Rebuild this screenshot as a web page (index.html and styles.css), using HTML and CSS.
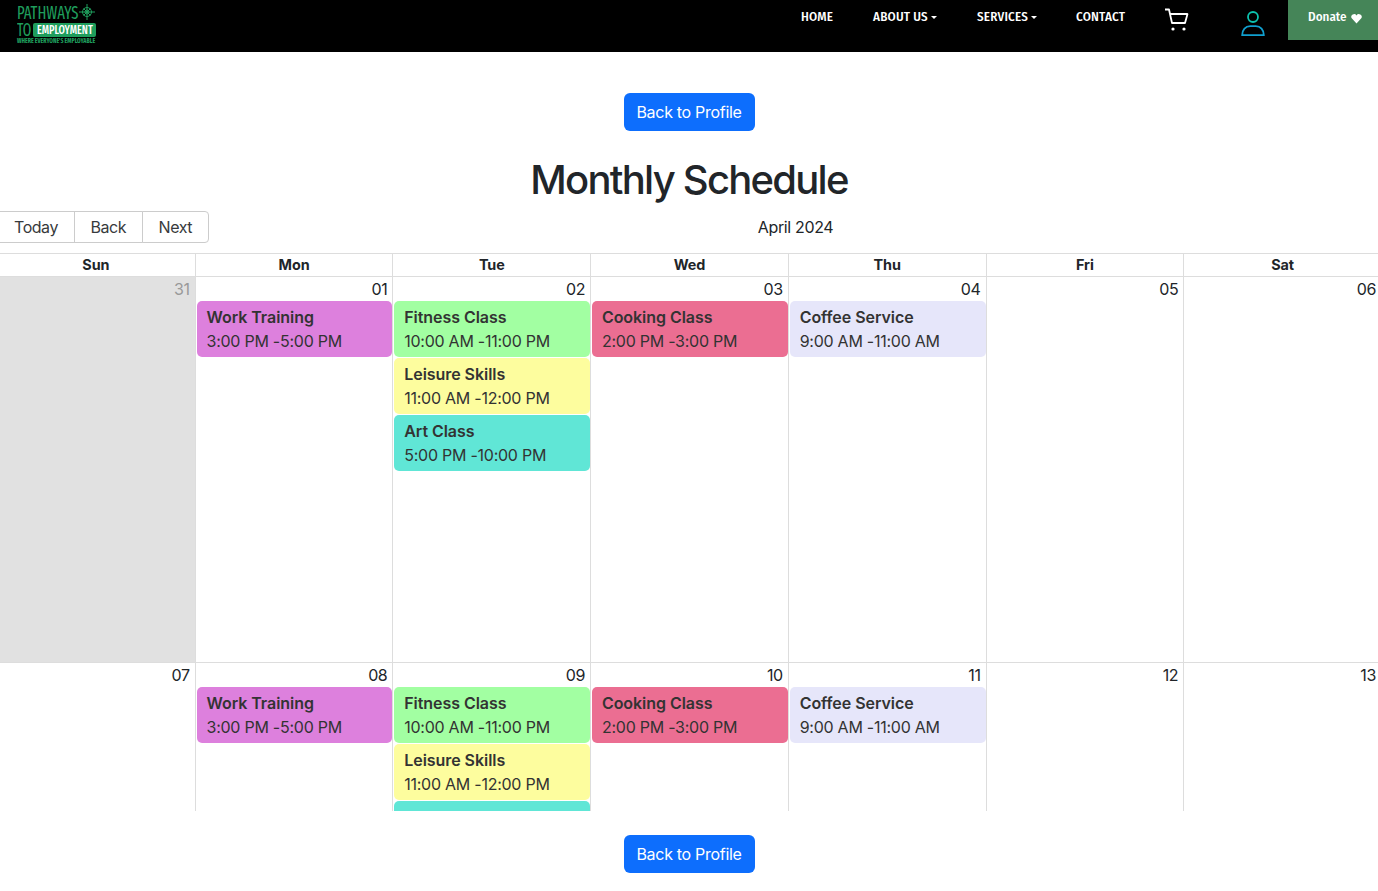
FILE: index.html
```html
<!DOCTYPE html>
<html lang="en">
<head>
<meta charset="utf-8">
<title>Monthly Schedule</title>
<link rel="stylesheet" href="styles.css">
</head>
<body>
<header class="topbar">
  <a class="logo" href="#">
    <span class="logo-top"><span class="logo-path">PATHWAYS</span>
      <svg class="logo-compass" viewBox="0 0 16 16" fill="none" stroke="#1f9d5c" stroke-width="1"><circle cx="8" cy="8" r="4.500"/><circle cx="8" cy="8" r="2"/><path d="M8 0v16M0 8h16M4.500 4.500l7 7M11.500 4.500l-7 7"/></svg>
    </span>
    <span class="logo-mid"><span class="logo-to">TO</span><span class="logo-pill"><span class="logo-emp">EMPLOYMENT</span></span></span>
    <span class="logo-tag">WHERE EVERYONE'S EMPLOYABLE</span>
  </a>
  <nav class="nav">
    <a class="nav-link nav-home" href="#">HOME</a>
    <a class="nav-link nav-about" href="#">ABOUT US<span class="caret"></span></a>
    <a class="nav-link nav-services" href="#">SERVICES<span class="caret"></span></a>
    <a class="nav-link nav-contact" href="#">CONTACT</a>
    <a class="nav-cart" href="#" aria-label="Cart">
      <svg viewBox="0 0 24 24" width="24" height="24" fill="none" stroke="#fff" stroke-width="1.800" stroke-linejoin="round"><path d="M0 1.500h4l3 13.500h13l2.500-9H5"/><circle cx="8" cy="21" r="1.600" fill="#fff" stroke="none"/><circle cx="19" cy="21" r="1.600" fill="#fff" stroke="none"/></svg>
    </a>
    <a class="nav-user" href="#" aria-label="Account">
      <svg viewBox="0 0 24 26" width="24" height="26" fill="none" stroke-width="1.800"><circle cx="12" cy="6" r="5" stroke="#0cc2ae"/><path d="M1.200 24.100c0-5.500 3.300-9 8-9h5.600c4.700 0 8 3.500 8 9z" stroke="#10a0cf"/></svg>
    </a>
    <a class="donate" href="#">Donate
      <svg viewBox="0 0 12 12" width="11" height="11" fill="#fff"><path d="M6 11.500L0.800 5.800A3 3 0 0 1 6 2.600a3 3 0 0 1 5.200 3.200z"/></svg>
    </a>
  </nav>
</header>

<main class="page">
  <div class="action"><a class="btn-primary" href="#">Back to Profile</a></div>
  <h1 class="title">Monthly Schedule</h1>

  <section class="calendar">
    <div class="toolbar">
      <div class="btn-group">
        <button class="tool-btn" type="button">Today</button>
        <button class="tool-btn" type="button">Back</button>
        <button class="tool-btn" type="button">Next</button>
      </div>
      <span class="month-label">April 2024</span>
    </div>
    <div class="month-view">
      <div class="head-row">
        <div class="head-cell">Sun</div><div class="head-cell">Mon</div><div class="head-cell">Tue</div><div class="head-cell">Wed</div><div class="head-cell">Thu</div><div class="head-cell">Fri</div><div class="head-cell">Sat</div>
      </div>
      <div class="week">
        <div class="day off"><div class="date">31</div></div>
        <div class="day"><div class="date">01</div>
          <div class="event ev-purple"><strong>Work Training</strong><span>3:00 PM -5:00 PM</span></div>
        </div>
        <div class="day"><div class="date">02</div>
          <div class="event ev-green"><strong>Fitness Class</strong><span>10:00 AM -11:00 PM</span></div>
          <div class="event ev-yellow"><strong>Leisure Skills</strong><span>11:00 AM -12:00 PM</span></div>
          <div class="event ev-teal"><strong>Art Class</strong><span>5:00 PM -10:00 PM</span></div>
        </div>
        <div class="day"><div class="date">03</div>
          <div class="event ev-pink"><strong>Cooking Class</strong><span>2:00 PM -3:00 PM</span></div>
        </div>
        <div class="day"><div class="date">04</div>
          <div class="event ev-lav"><strong>Coffee Service</strong><span>9:00 AM -11:00 AM</span></div>
        </div>
        <div class="day"><div class="date">05</div></div>
        <div class="day"><div class="date">06</div></div>
      </div>
      <div class="week">
        <div class="day"><div class="date">07</div></div>
        <div class="day"><div class="date">08</div>
          <div class="event ev-purple"><strong>Work Training</strong><span>3:00 PM -5:00 PM</span></div>
        </div>
        <div class="day"><div class="date">09</div>
          <div class="event ev-green"><strong>Fitness Class</strong><span>10:00 AM -11:00 PM</span></div>
          <div class="event ev-yellow"><strong>Leisure Skills</strong><span>11:00 AM -12:00 PM</span></div>
          <div class="event ev-teal"><strong>Art Class</strong><span>5:00 PM -10:00 PM</span></div>
        </div>
        <div class="day"><div class="date">10</div>
          <div class="event ev-pink"><strong>Cooking Class</strong><span>2:00 PM -3:00 PM</span></div>
        </div>
        <div class="day"><div class="date">11</div>
          <div class="event ev-lav"><strong>Coffee Service</strong><span>9:00 AM -11:00 AM</span></div>
        </div>
        <div class="day"><div class="date">12</div></div>
        <div class="day"><div class="date">13</div></div>
      </div>
    </div>
  </section>

  <div class="action action-bottom"><a class="btn-primary" href="#">Back to Profile</a></div>
</main>
</body>
</html>
```

FILE: styles.css
```css
* { box-sizing: border-box; }
html, body { margin: 0; padding: 0; overflow: hidden; }
body {
  font-family: Inter, "Liberation Sans", sans-serif;
  font-size: 16px;
  line-height: 24px;
  color: #212529;
  background: #fff;
}
a { text-decoration: none; color: inherit; }

.topbar {
  height: 52px;
  background: #000;
  display: flex;
  justify-content: space-between;
  align-items: flex-start;
}
.logo {
  display: flex;
  flex-direction: column;
  width: 81px;
  margin: 4px 0 0 17px;
  font-family: "Fira Sans Extra Condensed", "Fira Sans Condensed", "Liberation Sans", sans-serif;
  color: #1f9d5c;
}
.logo-top { display: flex; align-items: center; height: 17px; }
.logo-path {
  display: block;
  font-size: 19px;
  line-height: 17px;
  width: 62px;
  white-space: nowrap;
  transform: scaleX(0.84);
  transform-origin: 0 50%;
}
.logo-compass { width: 16px; height: 16px; margin: -1px 0 0 0; }
.logo-mid { display: flex; align-items: center; height: 16px; margin-top: 1px; }
.logo-to {
  display: block;
  font-size: 19px;
  line-height: 16px;
  width: 16px;
  transform: scaleX(0.78);
  transform-origin: 0 50%;
}
.logo-pill {
  display: flex;
  justify-content: center;
  width: 63px;
  height: 14px;
  background: #1f9d5c;
  color: #fff;
  border-radius: 2px;
  overflow: hidden;
}
.logo-emp {
  font-size: 13px;
  line-height: 14px;
  font-weight: 500;
  white-space: nowrap;
  transform: scaleX(0.85);
}
.logo-tag {
  font-size: 6.300px;
  line-height: 6px;
  font-weight: 700;
  white-space: nowrap;
}

.nav {
  display: flex;
  align-items: flex-start;
  font-family: "Fira Sans Condensed", "Liberation Sans", sans-serif;
  color: #fff;
}
.nav-link {
  font-size: 13px;
  font-weight: 500;
  letter-spacing: 0.2px;
  line-height: 16px;
  margin-top: 9px;
  white-space: nowrap;
}
.nav-home { width: 72px; }
.nav-about { width: 104px; }
.nav-services { width: 99px; }
.nav-contact { width: 89px; }
.caret {
  display: inline-block;
  margin-left: 3px;
  vertical-align: 2px;
  border-top: 3px solid #fff;
  border-left: 3px solid transparent;
  border-right: 3px solid transparent;
}
.nav-cart { width: 76px; height: 24px; margin-top: 8px; }
.nav-user { width: 47px; height: 26px; margin-top: 11px; }
.nav-cart svg, .nav-user svg { display: block; }
.donate {
  width: 90px;
  height: 40px;
  background: #458558;
  font-size: 13px;
  font-weight: 500;
  line-height: 16px;
  padding: 9px 0 0 20px;
  white-space: nowrap;
}
.donate svg { vertical-align: -3px; margin-left: 2px; }

.page { display: flex; flex-direction: column; letter-spacing: -0.35px; }
.action { display: flex; justify-content: center; margin-top: 41px; }
.action-bottom { margin-top: 24px; }
.btn-primary {
  display: block;
  width: 131px;
  background: #0d6efd;
  color: #fff;
  padding: 7px 0;
  border-radius: 6px;
  line-height: 24px;
  letter-spacing: -0.3px;
  text-align: center;
  white-space: nowrap;
}
.title {
  margin: 25px 0 7px;
  font-size: 40px;
  line-height: 48px;
  font-weight: 500;
  letter-spacing: -1.750px;
  text-align: center;
}

.calendar {
  margin: 0 -4px;
  height: 600px;
  overflow: hidden;
  display: flex;
  flex-direction: column;
}
.toolbar { display: flex; align-items: center; margin-bottom: 10px; height: 32px; flex: none; }
.btn-group { display: flex; }
.tool-btn {
  font: inherit;
  letter-spacing: -0.45px;
  color: #373a3c;
  background: #fff;
  border: 1px solid #ccc;
  height: 32px;
  padding: 0 15.500px;
  margin: 0 0 0 -1px;
  line-height: 24px;
}
.tool-btn:first-child { margin-left: 0; border-radius: 4px 0 0 4px; padding: 0 16px 0 17px; }
.tool-btn:last-child { border-radius: 0 4px 4px 0; padding: 0 16px; }
.month-label { flex: 1; text-align: center; }

.month-view { border: 1px solid #ddd; flex: none; }
.head-row, .week { display: grid; grid-template-columns: repeat(7, minmax(0, 1fr)); }
.head-cell {
  height: 22px;
  font-size: 14.400px;
  font-weight: 700;
  letter-spacing: -0.1px;
  line-height: 22px;
  text-align: center;
  border-left: 1px solid #ddd;
}
.head-cell:first-child { border-left: 0; }
.week { height: 386px; border-top: 1px solid #ddd; }
.day { border-left: 1px solid #ddd; padding-left: 1px; }
.day:first-child { border-left: 0; padding-left: 0; }
.off { background: #e1e1e1; }
.date { height: 24px; text-align: right; padding-right: 5px; }
.off .date { color: #999; }
.event {
  height: 56px;
  margin-bottom: 1px;
  padding: 4px 9.800px;
  border-radius: 5px;
  color: #333;
  white-space: nowrap;
}
.event strong, .event span { display: block; }
.event strong { font-weight: 600; letter-spacing: -0.05px; }
.event span { letter-spacing: -0.25px; }
.ev-purple { background: #dd80dd; }
.ev-green { background: #a2ffa2; }
.ev-yellow { background: #fdfd9e; }
.ev-teal { background: #60e6d6; }
.ev-pink { background: #eb6e92; }
.ev-lav { background: #e6e6fa; }
```
